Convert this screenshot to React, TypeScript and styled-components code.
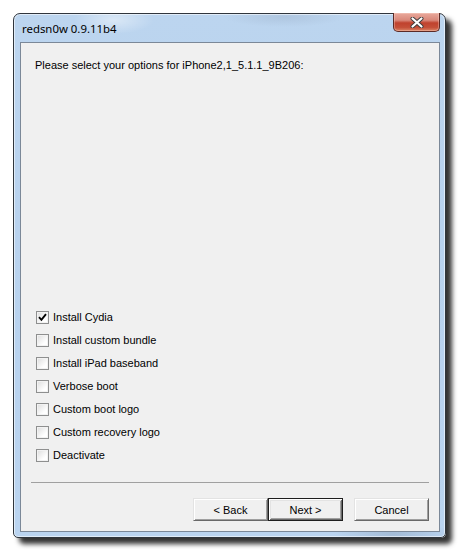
import React from 'react'
import styled, { createGlobalStyle } from 'styled-components'

const GlobalStyle = createGlobalStyle`
  html, body {
    margin: 0;
    padding: 0;
    background: #ffffff;
  }
  body {
    width: 461px;
    height: 553px;
    overflow: hidden;
  }
`

const options = [
  { label: 'Install Cydia', checked: true },
  { label: 'Install custom bundle', checked: false },
  { label: 'Install iPad baseband', checked: false },
  { label: 'Verbose boot', checked: false },
  { label: 'Custom boot logo', checked: false },
  { label: 'Custom recovery logo', checked: false },
  { label: 'Deactivate', checked: false },
]

const App = () => {
  return (
    <>
      <GlobalStyle />
      <Desktop>
        <Window>
          <TitleBar>
            <Title>redsn0w 0.9.11b4</Title>
            <CloseButton>
              <svg width="14" height="11" viewBox="0 0 14 11">
                <path d="M2.5 1.5 L11.5 9.5 M11.5 1.5 L2.5 9.5" stroke="#3b3b3b" strokeWidth="4" strokeLinecap="round" fill="none" />
                <path d="M2.5 1.5 L11.5 9.5 M11.5 1.5 L2.5 9.5" stroke="#ffffff" strokeWidth="2.2" strokeLinecap="round" fill="none" />
              </svg>
            </CloseButton>
          </TitleBar>
          <Client>
            <Prompt>Please select your options for iPhone2,1_5.1.1_9B206:</Prompt>
            <OptionList>
              {options.map((o) => (
                <OptionRow key={o.label}>
                  <Box>
                    {o.checked && (
                      <svg width="9" height="9" viewBox="0 0 9 9">
                        <path d="M1 4.2 L3.4 6.8 L8 1.2" stroke="#000" strokeWidth="1.9" fill="none" />
                      </svg>
                    )}
                  </Box>
                  <Label>{o.label}</Label>
                </OptionRow>
              ))}
            </OptionList>
            <Separator />
            <ButtonRow>
              <Button>&lt; Back</Button>
              <Button $default>Next &gt;</Button>
              <Button $gap>Cancel</Button>
            </ButtonRow>
          </Client>
        </Window>
      </Desktop>
    </>
  )
}

export default App

const Desktop = styled.div`
  padding: 13px 0 0 13px;
`

const Window = styled.div`
  width: 433px;
  height: 525px;
  box-sizing: border-box;
  border: 1px solid #30363d;
  border-radius: 7px 7px 5px 5px;
  padding: 0 5px 5px 6px;
  display: flex;
  flex-direction: column;
  background:
    radial-gradient(ellipse 40px 14px at 100px 6px, rgba(255, 255, 255, 0.45), rgba(255, 255, 255, 0)),
    radial-gradient(ellipse 60px 10px at 270px 3px, rgba(150, 170, 195, 0.35), rgba(150, 170, 195, 0)),
    radial-gradient(ellipse 60px 12px at 380px 520px, rgba(120, 140, 165, 0.35), rgba(120, 140, 165, 0)),
    linear-gradient(#bcd5ef, #b8d2ee 40%, #bad4f0);
  box-shadow:
    inset 0 0 0 1px rgba(255, 255, 255, 0.55),
    6px 6px 5px rgba(0, 0, 0, 0.8);
`

const TitleBar = styled.div`
  height: 28px;
  display: flex;
  align-items: flex-start;
  justify-content: space-between;
`

const Title = styled.div`
  margin: 7px 0 0 2px;
  font-family: 'Noto Sans', 'Liberation Sans', sans-serif;
  font-size: 11.4px;
  line-height: 15px;
  color: #000;
`

const CloseButton = styled.div`
  margin-top: -1px;
  width: 47px;
  height: 19px;
  box-sizing: border-box;
  border: 1px solid #5b2a26;
  border-top: none;
  border-radius: 0 0 5px 5px;
  display: flex;
  align-items: center;
  justify-content: center;
  background: linear-gradient(#e9a99c 0%, #d9887a 40%, #c0422e 55%, #c44f38 80%, #db8566 100%);
  box-shadow: inset 0 0 0 1px rgba(255, 220, 210, 0.35);
`

const Client = styled.div`
  flex: 1;
  border: 1px solid #7b8898;
  background: #f0f0f0;
  display: flex;
  flex-direction: column;
  font-family: 'Liberation Sans', Arial, sans-serif;
  font-size: 11px;
  color: #000;
`

const Prompt = styled.div`
  padding: 16px 0 0 14px;
  line-height: 13px;
`

const OptionList = styled.div`
  margin-top: auto;
  padding-left: 15px;
  display: flex;
  flex-direction: column;
`

const OptionRow = styled.div`
  height: 23px;
  display: flex;
  align-items: center;
  gap: 4px;
`

const Box = styled.div`
  width: 13px;
  height: 13px;
  box-sizing: border-box;
  border: 1px solid #8e8f8f;
  background: linear-gradient(135deg, #dcdcdc, #ffffff 70%);
  box-shadow: inset 0 0 0 1px #f2f2f2;
  display: flex;
  align-items: center;
  justify-content: center;
`

const Label = styled.span`
  line-height: 13px;
`

const Separator = styled.div`
  margin: 15px 10px 0 10px;
  height: 1px;
  background: #a0a0a0;
`

const ButtonRow = styled.div`
  margin-top: 15px;
  padding: 0 10px 10px 0;
  display: flex;
  justify-content: flex-end;
`

const Button = styled.div<{ $default?: boolean; $gap?: boolean }>`
  width: 75px;
  height: 23px;
  box-sizing: border-box;
  margin-left: ${(p) => (p.$gap ? '11px' : '0')};
  display: flex;
  align-items: center;
  justify-content: center;
  background: #f0f0f0;
  border: 1px solid;
  border-color: ${(p) => (p.$default ? '#1e1e1e' : '#e3e3e3 #696969 #696969 #e3e3e3')};
  box-shadow: ${(p) =>
    p.$default
      ? 'inset 1px 1px #ffffff, inset -1px -1px #696969, inset 2px 2px #e3e3e3, inset -2px -2px #a0a0a0'
      : 'inset 1px 1px #ffffff, inset -1px -1px #a0a0a0'};
`
